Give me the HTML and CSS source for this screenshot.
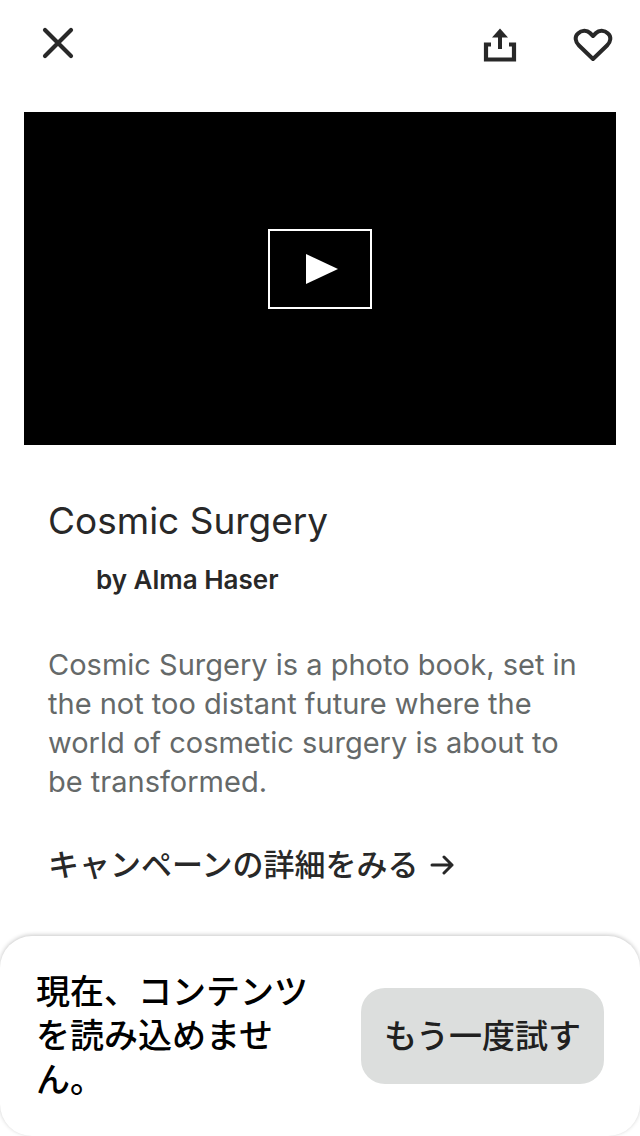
FILE: index.html
```html
<!DOCTYPE html>
<html lang="ja">
<head>
<meta charset="utf-8">
<meta name="viewport" content="width=device-width, initial-scale=1">
<title>Cosmic Surgery</title>
<link rel="stylesheet" href="styles.css">
</head>
<body>
<header class="toolbar">
  <button class="icon-button" type="button" aria-label="閉じる">
    <svg class="icon" viewBox="0 0 40 40" aria-hidden="true"><path d="M7 6 33 32M33 6 7 32" fill="none" stroke="currentColor" stroke-width="4.200" stroke-linecap="round"/></svg>
  </button>
  <div class="toolbar-actions">
    <button class="icon-button" type="button" aria-label="共有">
      <svg class="icon" viewBox="0 0 40 40" aria-hidden="true"><path d="M11 20.500H6V35.500H34V20.500H29" fill="none" stroke="currentColor" stroke-width="4.200"/><path d="M20 4.500 28 13.500H22V25H18V13.500H12Z" fill="currentColor"/></svg>
    </button>
    <button class="icon-button" type="button" aria-label="お気に入り">
      <svg class="icon" viewBox="0 0 40 40" aria-hidden="true"><path d="M20 35 6 21.500C2 17.500 1.500 12.500 5 9.500 8.500 6 14 6 17 9L20 12 23 9C26 6 31.500 6 35 9.500 38.500 12.500 38 17.500 34 21.500Z" fill="none" stroke="currentColor" stroke-width="4" stroke-linejoin="round"/></svg>
    </button>
  </div>
</header>
<main class="content">
  <section class="video">
    <button class="play" type="button" aria-label="再生">
      <svg class="play-icon" viewBox="0 0 32 30" aria-hidden="true"><path d="M0 0 32 15 0 30Z" fill="currentColor"/></svg>
    </button>
  </section>
  <section class="campaign" lang="en">
    <h1 class="title">Cosmic Surgery</h1>
    <p class="author">by Alma Haser</p>
    <p class="summary">Cosmic Surgery is a photo book, set in the not too distant future where the world of cosmetic surgery is about to be transformed.</p>
    <a class="more" href="#campaign" lang="ja">キャンペーンの詳細をみる
      <svg class="arrow" viewBox="0 0 24 24" aria-hidden="true"><path d="M2 12H22M14 4 22 12 14 20" fill="none" stroke="currentColor" stroke-width="3" stroke-linecap="round" stroke-linejoin="round"/></svg>
    </a>
  </section>
</main>
<section class="notice" role="alert">
  <p class="notice-text">現在、コンテンツを読み込めません。</p>
  <button class="retry" type="button">もう一度試す</button>
</section>
</body>
</html>
```

FILE: styles.css
```css
* {
  box-sizing: border-box;
}

body {
  display: flex;
  flex-direction: column;
  min-height: 100vh;
  margin: 0;
  background: #fff;
  color: #282828;
  font-family: Inter, "Noto Sans CJK JP", sans-serif;
}

button {
  padding: 0;
  border: 0;
  background: none;
  color: inherit;
  font: inherit;
  cursor: pointer;
}

.toolbar {
  display: flex;
  align-items: center;
  justify-content: space-between;
  padding: 24px 27px 24px 38px;
}

.toolbar-actions {
  display: flex;
  gap: 53px;
}

.icon-button,
.icon {
  display: block;
  width: 40px;
  height: 40px;
}

.content {
  padding: 24px;
}

.video {
  display: grid;
  place-items: center;
  aspect-ratio: 16 / 9;
  padding-bottom: 20px;
  background: #000;
}

.play {
  display: grid;
  place-items: center;
  width: 104px;
  height: 80px;
  padding-left: 4px;
  border: 2px solid #fff;
  color: #fff;
}

.play-icon {
  width: 32px;
  height: 30px;
}

.campaign {
  display: flex;
  flex-direction: column;
  align-items: flex-start;
  padding: 52px 24px 0;
}

.title,
.author,
.summary {
  margin: 0;
}

.title {
  font-size: 37px;
  font-weight: 400;
  line-height: 48px;
}

.author {
  padding: 19px 48px 0;
  font-size: 26px;
  font-weight: 600;
  line-height: 32px;
}

.summary {
  padding-top: 49px;
  color: #656969;
  font-size: 29px;
  line-height: 39px;
}

.more {
  display: flex;
  align-items: center;
  gap: 12px;
  margin-top: 44px;
  color: inherit;
  font-size: 31px;
  font-weight: 500;
  line-height: 40px;
  text-decoration: none;
}

.arrow {
  width: 24px;
  height: 24px;
}

.notice {
  display: flex;
  align-items: center;
  justify-content: space-between;
  gap: 32px;
  margin-top: auto;
  padding: 34px 36px;
  border-radius: 32px;
  background: #fff;
  box-shadow: 0 -1px 4px rgb(0 0 0 / 22%);
}

.notice-text {
  flex: 1;
  margin: 0;
  color: #000;
  font-size: 34px;
  font-weight: 500;
  line-height: 44px;
}

.retry {
  padding: 24px 23px;
  border-radius: 24px;
  background: #dcdedd;
  color: #202020;
  font-size: 33px;
  font-weight: 500;
  line-height: 48px;
}
```
